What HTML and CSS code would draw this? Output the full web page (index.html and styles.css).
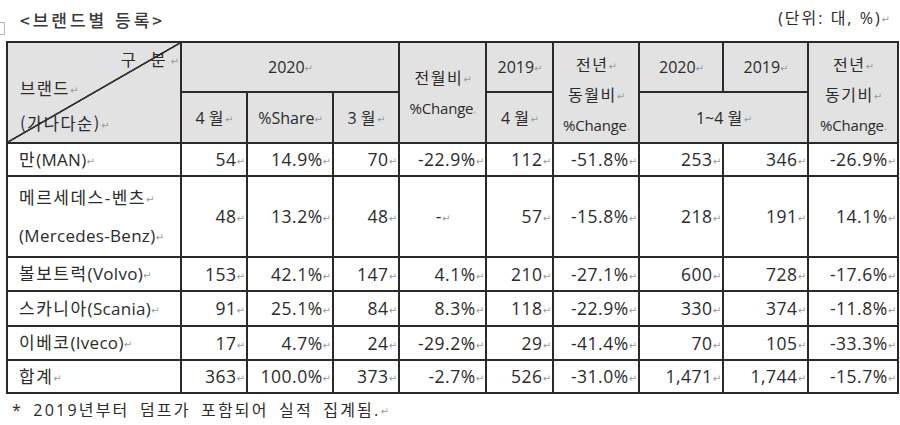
FILE: index.html
```html
<!DOCTYPE html>
<html lang="ko">
<head>
<meta charset="utf-8">
<link rel="stylesheet" href="styles.css">
</head>
<body>
<div class="page">
  <div class="top">
    <div class="title">&lt;브랜드별 등록&gt;</div>
    <div class="unit">(단위: 대, %)<span class="rm">↵</span></div>
  </div>
  <div class="tablewrap">
  <span class="handle"></span>
  <table class="grid">
    <colgroup>
      <col style="width:174px"><col style="width:66px"><col style="width:86px"><col style="width:66px"><col style="width:87px"><col style="width:67px"><col style="width:86px"><col style="width:84px"><col style="width:85px"><col style="width:90px">
    </colgroup>
    <thead>
      <tr class="h1">
        <th rowspan="2" class="diag">
          <div class="diag-in">
            <span class="gubun">구 분<span class="rm">↵</span></span>
            <span class="brand">브랜드<span class="rm">↵</span></span>
            <span class="brand">(가나다순)<span class="rm">↵</span></span>
          </div>
        </th>
        <th colspan="3">2020<span class="rm">↵</span></th>
        <th rowspan="2" class="stack s2"><span class="ln ko">전월비<span class="rm">↵</span></span><span class="ln small">%Change<span class="rm">.</span></span></th>
        <th>2019<span class="rm">↵</span></th>
        <th rowspan="2" class="stack s3"><span class="ln ko">전년<span class="rm">↵</span></span><span class="ln ko">동월비<span class="rm">↵</span></span><span class="ln small">%Change<span class="rm">.</span></span></th>
        <th>2020<span class="rm">↵</span></th>
        <th>2019<span class="rm">↵</span></th>
        <th rowspan="2" class="stack s3"><span class="ln ko">전년<span class="rm">↵</span></span><span class="ln ko">동기비<span class="rm">↵</span></span><span class="ln small">%Change<span class="rm">.</span></span></th>
      </tr>
      <tr class="h2">
        <th>4 <span class="ko">월</span><span class="rm">↵</span></th>
        <th>%Share<span class="rm">↵</span></th>
        <th>3 <span class="ko">월</span><span class="rm">↵</span></th>
        <th>4 <span class="ko">월</span><span class="rm">↵</span></th>
        <th colspan="2">1~4 <span class="ko">월</span><span class="rm">↵</span></th>
      </tr>
    </thead>
    <tbody>
      <tr class="r1">
        <td class="name"><span class="ko">만</span>(MAN)<span class="rm">↵</span></td>
        <td>54<span class="rm">↵</span></td><td>14.9%<span class="rm">↵</span></td><td>70<span class="rm">↵</span></td><td>-22.9%<span class="rm">↵</span></td><td>112<span class="rm">↵</span></td><td>-51.8%<span class="rm">↵</span></td><td>253<span class="rm">↵</span></td><td>346<span class="rm">↵</span></td><td>-26.9%<span class="rm">↵</span></td>
      </tr>
      <tr class="r2">
        <td class="name"><div class="two"><span class="ln"><span class="ko">메르세데스-벤츠</span><span class="rm">↵</span></span><span class="ln">(Mercedes-Benz)<span class="rm">↵</span></span></div></td>
        <td>48<span class="rm">↵</span></td><td>13.2%<span class="rm">↵</span></td><td>48<span class="rm">↵</span></td><td class="c">-<span class="rm">↵</span></td><td>57<span class="rm">↵</span></td><td>-15.8%<span class="rm">↵</span></td><td>218<span class="rm">↵</span></td><td>191<span class="rm">↵</span></td><td>14.1%<span class="rm">↵</span></td>
      </tr>
      <tr class="r3">
        <td class="name"><span class="ko">볼보트럭</span>(Volvo)<span class="rm">↵</span></td>
        <td>153<span class="rm">↵</span></td><td>42.1%<span class="rm">↵</span></td><td>147<span class="rm">↵</span></td><td>4.1%<span class="rm">↵</span></td><td>210<span class="rm">↵</span></td><td>-27.1%<span class="rm">↵</span></td><td>600<span class="rm">↵</span></td><td>728<span class="rm">↵</span></td><td>-17.6%<span class="rm">↵</span></td>
      </tr>
      <tr class="r4">
        <td class="name"><span class="ko">스카니아</span>(Scania)<span class="rm">↵</span></td>
        <td>91<span class="rm">↵</span></td><td>25.1%<span class="rm">↵</span></td><td>84<span class="rm">↵</span></td><td>8.3%<span class="rm">↵</span></td><td>118<span class="rm">↵</span></td><td>-22.9%<span class="rm">↵</span></td><td>330<span class="rm">↵</span></td><td>374<span class="rm">↵</span></td><td>-11.8%<span class="rm">↵</span></td>
      </tr>
      <tr class="r5">
        <td class="name"><span class="ko">이베코</span>(Iveco)<span class="rm">↵</span></td>
        <td>17<span class="rm">↵</span></td><td>4.7%<span class="rm">↵</span></td><td>24<span class="rm">↵</span></td><td>-29.2%<span class="rm">↵</span></td><td>29<span class="rm">↵</span></td><td>-41.4%<span class="rm">↵</span></td><td>70<span class="rm">↵</span></td><td>105<span class="rm">↵</span></td><td>-33.3%<span class="rm">↵</span></td>
      </tr>
      <tr class="r6">
        <td class="name"><span class="ko">합계</span><span class="rm">↵</span></td>
        <td>363<span class="rm">↵</span></td><td>100.0%<span class="rm">↵</span></td><td>373<span class="rm">↵</span></td><td>-2.7%<span class="rm">↵</span></td><td>526<span class="rm">↵</span></td><td>-31.0%<span class="rm">↵</span></td><td>1,471<span class="rm">↵</span></td><td>1,744<span class="rm">↵</span></td><td>-15.7%<span class="rm">↵</span></td>
      </tr>
    </tbody>
  </table>
  </div>
  <div class="note">* 2019년부터 덤프가 포함되어 실적 집계됨.<span class="rm">↵</span></div>
</div>
</body>
</html>
```
FILE: styles.css
```css
html, body {
  margin: 0;
  padding: 0;
  background: #ffffff;
}
body {
  font-family: "Open Sans", "Noto Sans CJK KR", sans-serif;
  color: #2b2b2b;
}
.page {
  width: 900px;
  height: 425px;
  overflow: hidden;
}
.top {
  display: flex;
  justify-content: space-between;
  align-items: flex-end;
  height: 32px;
  padding: 0 10px 0 20px;
}
.title {
  font-family: "Noto Sans CJK KR", sans-serif;
  font-size: 17px;
  font-weight: 500;
  letter-spacing: 3px;
  line-height: 24px;
  color: #3a3a3a;
}
.unit {
  font-size: 16px;
  line-height: 24px;
  letter-spacing: 2px;
}
.rm {
  font-family: "DejaVu Sans", sans-serif;
  font-size: 10px;
  color: #9a9a9a;
  letter-spacing: 0;
  word-spacing: 0;
  font-weight: 400;
  vertical-align: 1px;
}
.ko {
  letter-spacing: 1.5px;
}
.tablewrap {
  display: flex;
  align-items: flex-start;
}
.handle {
  width: 4px;
  height: 11px;
  border: 1px solid #bbb;
  border-left: none;
  margin-top: -10px;
  margin-right: -4px;
  flex: none;
}
.grid {
  margin: 9px 0 0 5px;
  border-collapse: collapse;
  table-layout: fixed;
  width: 891px;
  font-size: 17.5px;
  color: #2b2b2b;
}
.grid th, .grid td {
  border: 2px solid #2a2a2a;
  padding: 0 1px 0 2px;
  overflow: hidden;
  white-space: nowrap;
}
.grid th {
  background: #e2e2e2;
  font-weight: 400;
  font-size: 16px;
  text-align: center;
  line-height: 20px;
}
.h1 { height: 50px; }
.h2 { height: 51px; }
.h1 th { vertical-align: middle; padding-top: 2px; }
.h2 th { padding-top: 3px; }
.stack .ln { display: block; }
.s2 .ln + .ln { margin-top: 8px; }
.s3 .ln + .ln { margin-top: 8px; }
.s3 { padding-top: 6px !important; }
.stack .ln.small { font-size: 15px; letter-spacing: -0.2px; }
.diag {
  background: linear-gradient(to bottom right, transparent calc(50% - 1.2px), #333 calc(50% - 0.6px), #333 calc(50% + 0.6px), transparent calc(50% + 1.2px)), #e2e2e2 !important;
}
.diag-in {
  display: flex;
  flex-direction: column;
  padding: 0 0 0 10px;
  text-align: left;
  font-family: "Noto Sans CJK KR", sans-serif;
  line-height: 22px;
  font-size: 16.5px;
}
.gubun {
  align-self: flex-end;
  letter-spacing: 5px;
  margin-top: -2px;
  margin-bottom: 4px;
}
.brand { letter-spacing: 1.5px; }
.brand + .brand { margin-top: 10px; }
.grid td {
  text-align: right;
  line-height: 22px;
  vertical-align: middle;
  padding-top: 2px;
  letter-spacing: 0.5px;
}
.grid td.c { text-align: center; }
.grid td.name {
  text-align: left;
  padding-left: 11px;
  letter-spacing: 0.3px;
  font-size: 17px;
}
.two .ln { display: block; }
.two .ln + .ln { margin-top: 14px; }
.r1 { height: 33px; }
.r2 { height: 81px; }
.r3 { height: 34px; }
.r4 { height: 35px; }
.r5 { height: 34px; }
.r6 { height: 33px; }
.note {
  margin: 4px 0 0 12px;
  font-size: 16px;
  letter-spacing: 2.2px;
  word-spacing: 4px;
  line-height: 24px;
}
```
